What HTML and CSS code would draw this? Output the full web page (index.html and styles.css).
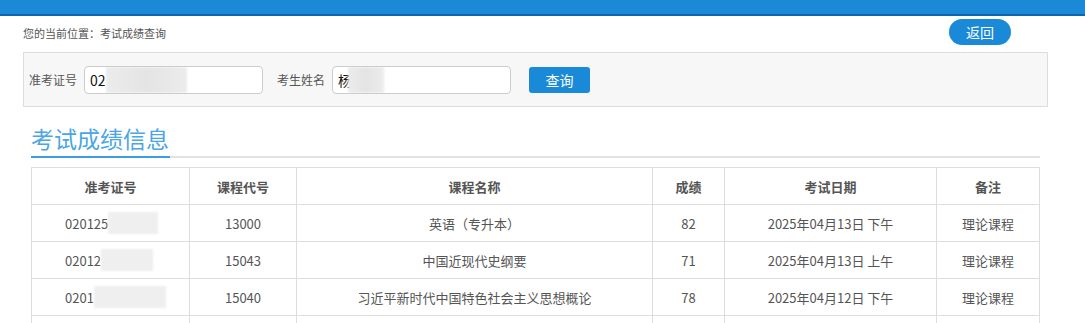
FILE: index.html
```html
<!DOCTYPE html>
<html lang="zh-CN">

<head>
    <meta charset="UTF-8" />
    <title>考试成绩查询</title>
    <link rel="stylesheet" href="styles.css">
</head>

<body>
    <div class="topbar"></div>

    <div class="page">
        <div class="crumb-row">
            <p class="crumb">您的当前位置：考试成绩查询</p>
            <button class="btn-back">返回</button>
        </div>

        <div class="search">
            <label>准考证号</label>
            <div class="field"><span>02</span><i class="mask" style="width: 81px;"></i></div>
            <label class="second">考生姓名</label>
            <div class="field"><span>杨</span><i class="mask" style="width: 36px; margin-left: -4px;"></i></div>
            <button class="btn-search">查询</button>
        </div>

        <div class="result">
            <h2><span>考试成绩信息</span></h2>

            <table>
                <colgroup>
                    <col style="width: 158px;">
                    <col style="width: 107px;">
                    <col style="width: 356px;">
                    <col style="width: 72px;">
                    <col style="width: 212px;">
                    <col style="width: 103px;">
                </colgroup>
                <thead>
                    <tr>
                        <th>准考证号</th>
                        <th>课程代号</th>
                        <th>课程名称</th>
                        <th>成绩</th>
                        <th>考试日期</th>
                        <th>备注</th>
                    </tr>
                </thead>
                <tbody>
                    <tr>
                        <td class="id"><span>020125</span><i class="mask" style="width: 50px;"></i></td>
                        <td>13000</td>
                        <td>英语（专升本）</td>
                        <td>82</td>
                        <td>2025年04月13日 下午</td>
                        <td>理论课程</td>
                    </tr>
                    <tr>
                        <td class="id"><span>02012</span><i class="mask" style="width: 52px;"></i></td>
                        <td>15043</td>
                        <td>中国近现代史纲要</td>
                        <td>71</td>
                        <td>2025年04月13日 上午</td>
                        <td>理论课程</td>
                    </tr>
                    <tr>
                        <td class="id"><span>0201</span><i class="mask" style="width: 72px;"></i></td>
                        <td>15040</td>
                        <td>习近平新时代中国特色社会主义思想概论</td>
                        <td>78</td>
                        <td>2025年04月12日 下午</td>
                        <td>理论课程</td>
                    </tr>
                    <tr>
                        <td class="id">&nbsp;</td>
                        <td></td>
                        <td></td>
                        <td></td>
                        <td></td>
                        <td></td>
                    </tr>
                </tbody>
            </table>
        </div>
    </div>
</body>

</html>
```

FILE: styles.css
```css
/* Base */
* {
    box-sizing: border-box;
    margin: 0;
    padding: 0;
}

body {
    font-family: "Noto Sans CJK SC", "Noto Sans", sans-serif;
    background-color: #fff;
    color: #555;
    font-size: 13px;
    overflow: hidden;
}

/* Top bar */
.topbar {
    height: 16px;
    background-color: #1a8ad8;
    border-bottom: 2px solid #0b68b0;
}

.page {
    padding: 0 37px 0 23px;
}

/* Breadcrumb */
.crumb-row {
    display: flex;
    justify-content: space-between;
    align-items: flex-start;
    height: 36px;
    padding-top: 3px;
}

.crumb {
    font-size: 11px;
    color: #555;
    margin-top: 6px;
}

.btn-back {
    width: 62px;
    height: 26px;
    margin-right: 37px;
    border: none;
    border-radius: 13px;
    background-color: #1a8ad8;
    color: #fff;
    font-family: inherit;
    font-size: 14px;
}

/* Search panel */
.search {
    display: flex;
    align-items: center;
    height: 55px;
    background-color: #f7f7f7;
    border: 1px solid #ddd;
    padding-left: 5px;
}

.search label {
    font-size: 12px;
    color: #555;
    width: 55px;
}

.search label.second {
    margin-left: 14px;
}

.field {
    display: flex;
    align-items: center;
    width: 179px;
    height: 28px;
    background-color: #fff;
    border: 1px solid #ccc;
    border-radius: 4px;
    padding-left: 5px;
    font-size: 14px;
    color: #111;
    overflow: hidden;
}

.mask {
    display: block;
    height: 26px;
    background: linear-gradient(90deg, #ececec, #e4e4e4 50%, #ececec);
    filter: blur(1px);
}

.btn-search {
    width: 61px;
    height: 26px;
    margin-left: 18px;
    border: none;
    border-radius: 3px;
    background-color: #1a8ad8;
    color: #fff;
    font-family: inherit;
    font-size: 14px;
}

/* Result */
.result {
    padding: 0 8px 0 8px;
    margin-top: 14px;
}

.result h2 {
    border-bottom: 2px solid #e2e2e2;
    height: 37px;
    margin-bottom: 9px;
}

.result h2 span {
    display: inline-block;
    font-size: 23px;
    font-weight: normal;
    color: #4aa6e4;
    line-height: 34px;
    height: 37px;
    border-bottom: 2px solid #3c9ee0;
    padding-right: 1px;
}

table {
    width: 1008px;
    border-collapse: collapse;
    table-layout: fixed;
}

th,
td {
    border: 1px solid #ddd;
    height: 37px;
    text-align: center;
    font-size: 13px;
    color: #555;
}

th {
    font-weight: bold;
}

td.id {
    text-align: left;
    padding-left: 33px;
}

td.id span,
td.id .mask {
    display: inline-block;
    vertical-align: middle;
}

td.id .mask {
    height: 22px;
    background: #efefef;
}
```
